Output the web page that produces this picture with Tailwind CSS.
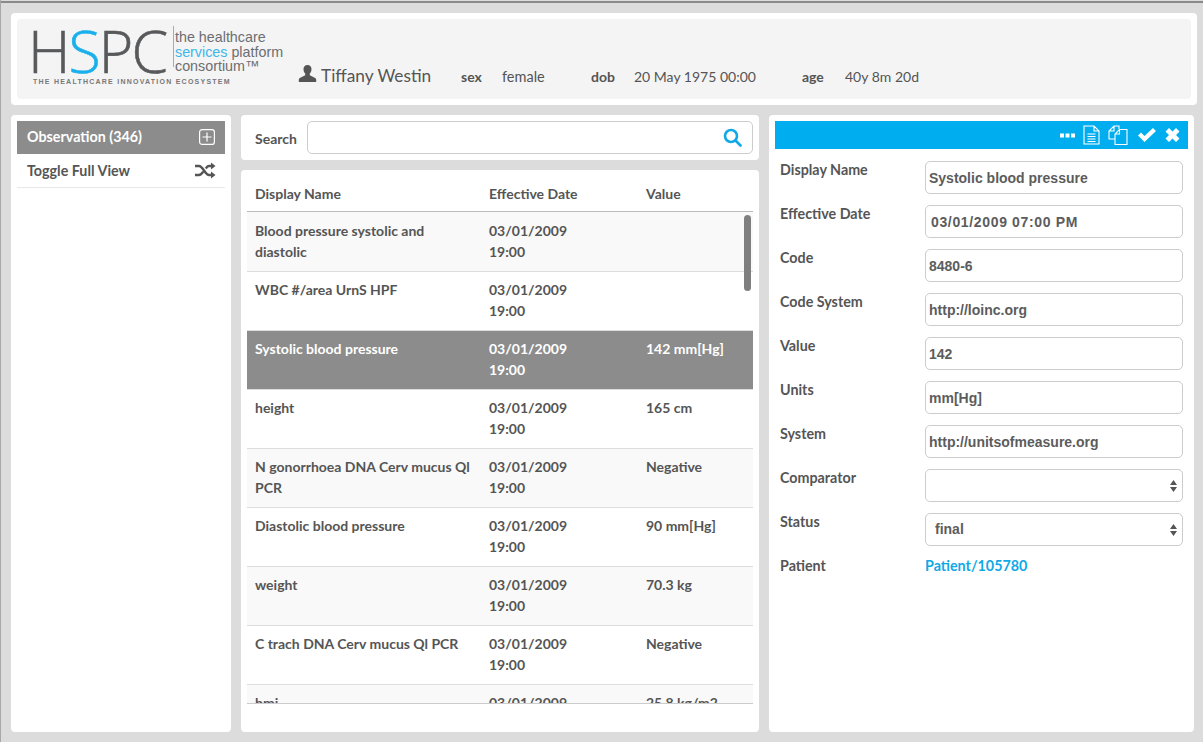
<!DOCTYPE html>
<html lang="en">
<head>
  <meta charset="UTF-8">
  <title>Observation - HSPC</title>
  <script src="https://cdn.jsdelivr.net/npm/@tailwindcss/browser@4"></script>
</head>
<body class="bg-[#dcdcdc] h-[742px] w-[1203px] overflow-hidden border-l border-[#a8a8a8] font-['Lato',sans-serif] text-[14px] text-[#555]">
  <div class="h-[3px] border-b-2 border-[#8a8a8a]"></div>

  <!-- patient header -->
  <header class="mt-[10px] ml-[10px] w-[1186px] h-[92px] bg-white rounded p-[6px]">
    <div class="h-[80px] bg-[#f4f4f4] rounded flex">
      <div class="ml-[11px] w-[257px] pt-[6px] shrink-0">
        <div class="flex items-start h-[46px]">
          <div class="font-['Open_Sans',sans-serif] font-light text-[59px] leading-[46px] mt-[2px] tracking-[-1.9px] [-webkit-text-stroke:0.6px_currentColor] text-[#58595b] w-[145px] whitespace-nowrap">H<span class="text-[#1ab0ec]">S</span>PC</div>
          <div class="w-px h-[41px] bg-[#aaa] mt-[1px] mr-[1px]"></div>
          <div class="font-['Liberation_Sans',sans-serif] text-[14.3px] leading-[14.5px] text-[#6d6e71] mt-[5px] whitespace-nowrap">the healthcare<br><span class="text-[#3db7ea]">services</span> platform<br>consortium™</div>
        </div>
        <div class="ml-[5px] font-['Liberation_Sans',sans-serif] font-bold text-[7px] tracking-[1.24px] text-[#77787b] mt-[6px] leading-[10px] whitespace-nowrap">THE HEALTHCARE INNOVATION ECOSYSTEM</div>
      </div>
      <div class="flex items-baseline pt-[44px] pl-[13px]">
        <svg class="w-[19px] h-[19px] self-start mt-[1px] text-[#555]" viewBox="0 0 19 19" fill="currentColor"><path d="M9.500 1c-2.600 0-4 1.900-4 4.300 0 1.800.7 3.300 1.700 4.300v1.600L1.800 14c-.7.400-1 1-1 1.800V18h17.400v-2.200c0-.8-.3-1.400-1-1.800l-5.400-2.800V9.600c1-1 1.700-2.500 1.700-4.300 0-2.400-1.400-4.300-4-4.300z"/></svg>
        <span class="ml-[4px] text-[17.3px] w-[140px]">Tiffany Westin</span>
        <b class="w-[41px]">sex</b><span class="w-[89px] text-[14.5px]">female</span>
        <b class="w-[43px]">dob</b><span class="w-[168px]">20 May 1975 00:00</span>
        <b class="w-[43px]">age</b><span>40y 8m 20d</span>
      </div>
    </div>
  </header>

  <div class="mt-[10px] ml-[10px] flex gap-[10px] h-[617px]">
    <!-- left nav -->
    <aside class="w-[220px] bg-white rounded p-[6px] text-[14.3px]">
      <div class="h-[33px] bg-[#8c8c8c] text-white font-bold flex items-center justify-between pl-[10px] pr-[10px] pb-[2px]">
        <span>Observation (346)</span>
        <svg class="w-[16px] h-[16px] mt-[1px]" viewBox="0 0 16 16" fill="none" stroke="currentColor" stroke-width="1.200"><rect x=".6" y=".6" width="14.800" height="14.800" rx="2.500"/><path d="M8 3.500v9M3.500 8h9"/></svg>
      </div>
      <div class="h-[34px] border-b border-[#e8e8e8] font-bold flex items-center justify-between pl-[10px] pr-[9px]">
        <span>Toggle Full View</span>
        <svg class="w-[21px] h-[17px]" viewBox="0 0 21 17" fill="none" stroke="#555" stroke-width="2.400"><path d="M0 4h4c4 0 6 9 10 9h3M0 13h4c1.800 0 3-1.600 4.200-3.400M10.800 6.400C12 4.900 12.500 4 14 4h3"/><path d="M16 .5 20.500 4 16 7.500zM16 9.500l4.500 3.500-4.500 3.500z" fill="#555" stroke="none"/></svg>
      </div>
    </aside>

    <!-- list column -->
    <main class="w-[518px] flex flex-col gap-[10px]">
      <div class="h-[45px] bg-white rounded flex items-center pl-[14px] pr-[6px] font-bold">
        <span class="w-[52px] pt-[2px]">Search</span>
        <div class="relative flex-1">
          <input class="w-full h-[33px] border border-[#ccc] rounded-[5px] bg-white" type="text">
          <svg class="absolute right-[11px] top-[7px] w-[19px] h-[19px] text-[#0fa9e6]" viewBox="0 0 19 19" fill="none" stroke="currentColor" stroke-width="2.600"><circle cx="8" cy="8" r="6"/><path d="m12.500 12.500 5 5" stroke-linecap="round"/></svg>
        </div>
      </div>
      <div class="flex-1 bg-white rounded px-[6px] font-bold">
        <div class="grid grid-cols-[234px_157px_1fr] h-[42px] pt-[5px] border-b border-[#bbb] items-center px-[8px]">
          <span>Display Name</span><span>Effective Date</span><span>Value</span>
        </div>
        <div class="relative h-[492px] overflow-hidden border-b border-[#ccc]">
          <div class="grid grid-cols-[234px_157px_1fr] h-[60px] px-[8px] pt-[8px] leading-[21px] bg-[#f9f9f9] border-b border-[#ddd]"><span class="pr-[12px]">Blood pressure systolic and diastolic</span><span>03/01/2009<br>19:00</span><span></span></div>
          <div class="grid grid-cols-[234px_157px_1fr] h-[59px] px-[8px] pt-[7px] leading-[21px] border-b border-[#ddd]"><span>WBC #/area UrnS HPF</span><span>03/01/2009<br>19:00</span><span></span></div>
          <div class="grid grid-cols-[234px_157px_1fr] h-[59px] px-[8px] pt-[7px] leading-[21px] bg-[#8c8c8c] text-white border-b border-[#ddd]"><span>Systolic blood pressure</span><span>03/01/2009<br>19:00</span><span>142 mm[Hg]</span></div>
          <div class="grid grid-cols-[234px_157px_1fr] h-[59px] px-[8px] pt-[7px] leading-[21px] border-b border-[#ddd]"><span>height</span><span>03/01/2009<br>19:00</span><span>165 cm</span></div>
          <div class="grid grid-cols-[234px_157px_1fr] h-[59px] px-[8px] pt-[7px] leading-[21px] bg-[#f9f9f9] border-b border-[#ddd]"><span>N gonorrhoea DNA Cerv mucus Ql PCR</span><span>03/01/2009<br>19:00</span><span>Negative</span></div>
          <div class="grid grid-cols-[234px_157px_1fr] h-[59px] px-[8px] pt-[7px] leading-[21px] border-b border-[#ddd]"><span>Diastolic blood pressure</span><span>03/01/2009<br>19:00</span><span>90 mm[Hg]</span></div>
          <div class="grid grid-cols-[234px_157px_1fr] h-[59px] px-[8px] pt-[7px] leading-[21px] bg-[#f9f9f9] border-b border-[#ddd]"><span>weight</span><span>03/01/2009<br>19:00</span><span>70.3 kg</span></div>
          <div class="grid grid-cols-[234px_157px_1fr] h-[59px] px-[8px] pt-[7px] leading-[21px] border-b border-[#ddd]"><span>C trach DNA Cerv mucus Ql PCR</span><span>03/01/2009<br>19:00</span><span>Negative</span></div>
          <div class="grid grid-cols-[234px_157px_1fr] h-[59px] px-[8px] pt-[7px] leading-[21px] bg-[#f9f9f9]"><span>bmi</span><span>03/01/2009<br>19:00</span><span>25.8 kg/m2</span></div>
          <div class="absolute right-[2px] top-[3px] w-[7px] h-[76px] rounded-full bg-[#7f7f7f]"></div>
        </div>
      </div>
    </main>

    <!-- detail form -->
    <section class="w-[425px] bg-white rounded p-[6px] font-bold text-[14.3px]">
      <div class="h-[28px] bg-[#00aeef] flex items-center justify-end pr-[8px] text-white">
        <svg class="w-[15px] h-[5px]" viewBox="0 0 15 5" fill="currentColor"><rect width="4" height="4" y=".5"/><rect x="5.500" width="4" height="4" y=".5"/><rect x="11" width="4" height="4" y=".5"/></svg>
        <svg class="w-[17px] h-[20px] ml-[8px]" viewBox="0 0 17 20" fill="none" stroke="currentColor" stroke-width="1.100"><path d="M1 1h10L16 6v13H1zM11 1v5h5M4.500 9h8M4.500 11.500h8M4.500 14h8M4.500 16.500h8"/></svg>
        <svg class="w-[20px] h-[20px] ml-[8px]" viewBox="0 0 20 20" fill="none" stroke="currentColor" stroke-width="1.100"><path d="M7 14H1V6l5-5h5v3M1 6h5V1M7 19.500V9l4.500-4.500H19v15z M7 9h4.500V4.500"/></svg>
        <svg class="w-[18px] h-[14px] ml-[10px]" viewBox="0 0 18 14" fill="currentColor"><path d="M0 7.500 3 4.500l3.500 3.500L15 0l3 3L6.500 14z"/></svg>
        <svg class="w-[15px] h-[14px] ml-[9px]" viewBox="0 0 14 14" fill="currentColor"><path d="M3.500 0 7 3.500 10.500 0 14 3.500 10.500 7 14 10.500 10.500 14 7 10.500 3.500 14 0 10.500 3.500 7 0 3.500z"/></svg>
      </div>
      <div class="mt-[12px] pl-[5px] pr-[5px] grid grid-cols-[145px_1fr] gap-y-[11px] [&>label]:leading-[18px] [&_input]:w-full [&_input]:h-[33px] [&_input]:border [&_input]:border-[#ccc] [&_input]:rounded-[5px] [&_input]:px-[3px] [&_input]:font-['Liberation_Sans',sans-serif] [&_input]:text-[14px] [&_input]:text-[#5c5c5c]">
        <label>Display Name</label><input type="text" value="Systolic blood pressure">
        <label>Effective Date</label><input class="tracking-[0.65px] pl-[5px]!" type="text" value="03/01/2009 07:00 PM">
        <label>Code</label><input type="text" value="8480-6">
        <label>Code System</label><input type="text" value="http://loinc.org">
        <label>Value</label><input type="text" value="142">
        <label>Units</label><input type="text" value="mm[Hg]">
        <label>System</label><input type="text" value="http://unitsofmeasure.org">
        <label>Comparator</label>
        <div class="relative h-[33px]"><select class="appearance-none w-full h-[33px] border border-[#ccc] rounded-[5px] px-[8px] bg-white"><option></option></select>
          <svg class="absolute right-[6px] top-[11px] w-[7px] h-[12px] text-[#555]" viewBox="0 0 7 12" fill="currentColor"><path d="M3.500 0 7 5H0zM0 7h7l-3.500 5z"/></svg></div>
        <label>Status</label>
        <div class="relative h-[33px]"><select class="appearance-none w-full h-[33px] border border-[#ccc] rounded-[5px] px-[9px] bg-white font-['Liberation_Sans',sans-serif] text-[14px] font-bold text-[#5c5c5c]"><option>final</option></select>
          <svg class="absolute right-[6px] top-[11px] w-[7px] h-[12px] text-[#555]" viewBox="0 0 7 12" fill="currentColor"><path d="M3.500 0 7 5H0zM0 7h7l-3.500 5z"/></svg></div>
        <label>Patient</label><a class="text-[#0fa9e6] leading-[18px]" href="#">Patient/105780</a>
      </div>
    </section>
  </div>
</body>
</html>
